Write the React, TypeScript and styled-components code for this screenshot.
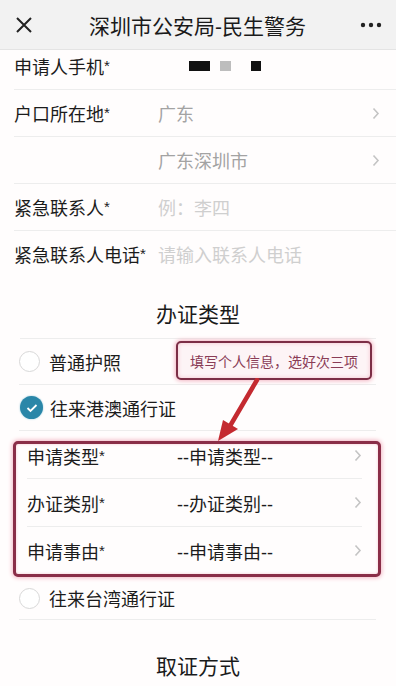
import React from 'react';
import styled, { createGlobalStyle } from 'styled-components';

const GlobalStyle = createGlobalStyle`
  html, body {
    margin: 0;
    padding: 0;
    background: #ffffff;
  }
  body {
    font-family: "Liberation Sans", "Noto Sans CJK SC", sans-serif;
    color: #222222;
  }
`;

const Page = styled.div`
  position: relative;
  width: 396px;
  height: 686px;
  overflow: hidden;
  background: #fffdfd;
`;

const Header = styled.div`
  position: relative;
  z-index: 2;
  height: 50px;
  display: flex;
  align-items: center;
  justify-content: space-between;
  padding: 0 14px 0 15px;
  box-sizing: border-box;
  background: #f2f2f2;
  border-bottom: 1px solid #e4e4e4;
`;

const Title = styled.div`
  flex: 1;
  text-align: center;
  font-size: 21px;
  color: #1a1a1a;
  padding-left: 2px;
`;

const Body = styled.div`
  margin-top: -7px;
`;

const Row = styled.div<{ $divider?: boolean }>`
  height: 47px;
  display: flex;
  align-items: center;
  margin-left: 14px;
  padding-right: 16px;
  box-sizing: border-box;
  border-bottom: ${(p) => (p.$divider ? '1px solid #ededed' : '1px solid transparent')};
`;

const Label = styled.div`
  width: 144px;
  flex-shrink: 0;
  font-size: 18px;
  color: #1c1c1c;
  white-space: nowrap;
`;

const Star = styled.span`
  font-size: 15px;
  vertical-align: 3px;
`;

const Value = styled.div<{ $tone?: 'gray' | 'faint' | 'dark' }>`
  flex: 1;
  font-size: 18px;
  white-space: nowrap;
  color: ${(p) => (p.$tone === 'faint' ? '#cfcfcf' : p.$tone === 'dark' ? '#1c1c1c' : '#a3a3a3')};
`;

const Masks = styled.div`
  flex: 1;
  display: flex;
  align-items: center;
  padding-left: 31px;
`;

const Mask = styled.span<{ $w: number; $c: string; $gap: number }>`
  display: inline-block;
  width: ${(p) => p.$w}px;
  height: 10px;
  background: ${(p) => p.$c};
  margin-right: ${(p) => p.$gap}px;
`;

const Section = styled.div<{ $top: number }>`
  text-align: center;
  font-size: 21px;
  line-height: 26px;
  color: #1a1a1a;
  padding-top: ${(p) => p.$top}px;
  padding-bottom: 10px;
  border-bottom: 1px solid #ededed;
  margin: 0 20px;
`;

const RadioRow = styled.div<{ $h: number; $divider?: boolean }>`
  height: ${(p) => p.$h}px;
  display: flex;
  align-items: center;
  gap: 9px;
  margin: 0 20px 0 19px;
  box-sizing: border-box;
  border-bottom: ${(p) => (p.$divider ? '1px solid #ededed' : '1px solid transparent')};
  font-size: 18px;
  color: #1c1c1c;
`;

const RadioCircle = styled.span`
  width: 21px;
  height: 21px;
  border-radius: 50%;
  border: 1px solid #d8d8d8;
  box-sizing: border-box;
  background: #fff;
`;

const CheckCircle = styled.span`
  width: 23px;
  height: 23px;
  margin-left: 1px;
  margin-right: -2px;
  border-radius: 50%;
  background: #2a86a8;
  box-shadow: 0 0 2px #8cc6da;
  display: flex;
  align-items: center;
  justify-content: center;
`;

const Highlight = styled.div`
  margin: 10px 15px 0 13px;
  border: 3px solid #8a2e48;
  border-radius: 5px;
  box-shadow: 0 0 4px 1px #f3b6c4, inset 0 0 3px #f6c6d0;
  background: #fffdfd;
`;

const SubRow = styled.div<{ $h: number; $pb?: number; $divider?: boolean }>`
  height: ${(p) => p.$h}px;
  padding-bottom: ${(p) => p.$pb ?? 0}px;
  display: flex;
  align-items: center;
  margin: 0 16px 0 11px;
  box-sizing: border-box;
  border-bottom: ${(p) => (p.$divider ? '1px solid #ededed' : 'none')};
`;

const SubLabel = styled.div`
  width: 150px;
  font-size: 18px;
  color: #1c1c1c;
`;

const Chevron = styled.svg`
  flex-shrink: 0;
`;

const Note = styled.div`
  position: absolute;
  z-index: 3;
  left: 176px;
  top: 341px;
  width: 196px;
  height: 39px;
  box-sizing: border-box;
  border: 2px solid #7c2e46;
  border-radius: 5px;
  background: #fdf4f6;
  box-shadow: 0 0 4px 1px #f2b4c2, inset 0 0 4px #f5c4cf;
  display: flex;
  align-items: center;
  justify-content: center;
  font-size: 14px;
  color: #8a3c56;
  white-space: nowrap;
`;

const Arrow = styled.svg`
  position: absolute;
  z-index: 3;
  left: 210px;
  top: 378px;
`;

const ChevronIcon = () => (
  <Chevron width="8" height="13" viewBox="0 0 8 13">
    <path d="M1.5 1.5 L6 6.5 L1.5 11.5" fill="none" stroke="#c4c4c4" strokeWidth="1.6" />
  </Chevron>
);

const rows = [
  { label: '申请类型', value: '--申请类型--', h: 35, pb: 11 },
  { label: '办证类别', value: '--办证类别--', h: 48 },
  { label: '申请事由', value: '--申请事由--', h: 47 },
];

export default function App() {
  return (
    <Page>
      <GlobalStyle />
      <Header>
        <svg width="18" height="18" viewBox="0 0 18 18">
          <path d="M2 2 L16 16 M16 2 L2 16" stroke="#222" strokeWidth="2" />
        </svg>
        <Title>深圳市公安局-民生警务</Title>
        <svg width="22" height="6" viewBox="0 0 22 6">
          <circle cx="3" cy="3" r="2.2" fill="#222" />
          <circle cx="11" cy="3" r="2.2" fill="#222" />
          <circle cx="19" cy="3" r="2.2" fill="#222" />
        </svg>
      </Header>

      <Body>
        <Row $divider>
          <Label>申请人手机<Star>*</Star></Label>
          <Masks>
            <Mask $w={21} $c="#111" $gap={10} />
            <Mask $w={11} $c="#bdbdbd" $gap={20} />
            <Mask $w={10} $c="#111" $gap={0} />
          </Masks>
        </Row>
        <Row $divider>
          <Label>户口所在地<Star>*</Star></Label>
          <Value>广东</Value>
          <ChevronIcon />
        </Row>
        <Row $divider>
          <Label />
          <Value>广东深圳市</Value>
          <ChevronIcon />
        </Row>
        <Row $divider>
          <Label>紧急联系人<Star>*</Star></Label>
          <Value $tone="faint">例：李四</Value>
        </Row>
        <Row>
          <Label>紧急联系人电话<Star>*</Star></Label>
          <Value $tone="faint">请输入联系人电话</Value>
        </Row>

        <Section $top={24}>办证类型</Section>

        <RadioRow $h={46} $divider>
          <RadioCircle />
          普通护照
        </RadioRow>
        <RadioRow $h={46} $divider>
          <CheckCircle>
            <svg width="12" height="10" viewBox="0 0 12 10">
              <path d="M1.5 5 L4.5 8 L10.5 2" fill="none" stroke="#fff" strokeWidth="1.8" />
            </svg>
          </CheckCircle>
          往来港澳通行证
        </RadioRow>

        <Highlight>
          {rows.map((r, i) => (
            <SubRow key={r.label} $h={r.h} $pb={r.pb} $divider={i < rows.length - 1}>
              <SubLabel>{r.label}<Star>*</Star></SubLabel>
              <Value $tone="dark">{r.value}</Value>
              <ChevronIcon />
            </SubRow>
          ))}
        </Highlight>

        <RadioRow $h={43} $divider>
          <RadioCircle />
          往来台湾通行证
        </RadioRow>

        <Section $top={34}>取证方式</Section>
      </Body>

      <Note>填写个人信息，选好次三项</Note>
      <Arrow width="60" height="66" viewBox="0 0 60 66">
        <path d="M47 2 L20 48" stroke="#c42a30" strokeWidth="4.5" strokeLinecap="round" />
        <path d="M8 63 L13 42 L28 51 Z" fill="#c42a30" />
      </Arrow>
    </Page>
  );
}
